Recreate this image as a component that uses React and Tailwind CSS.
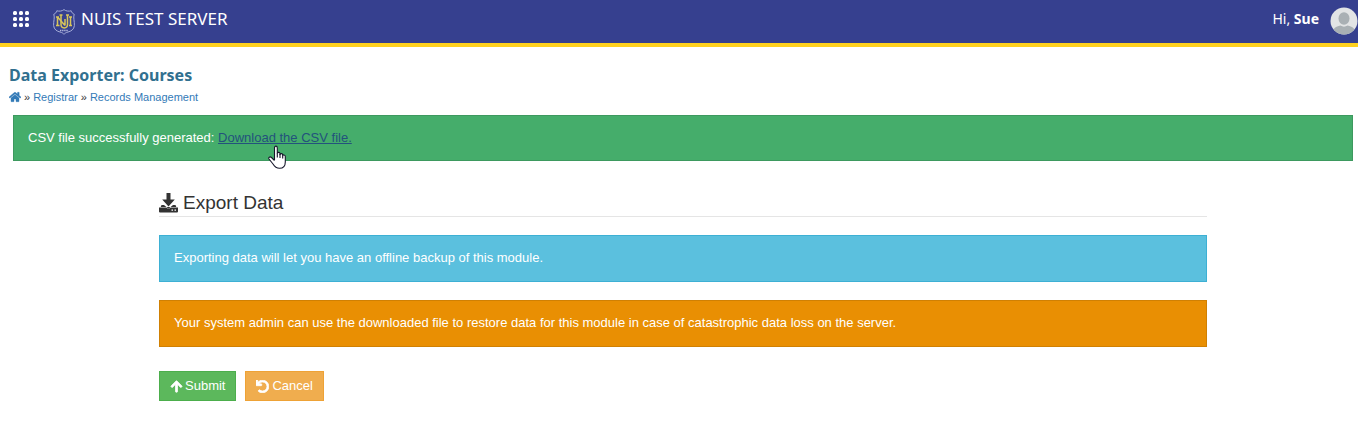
import React from 'react';
import { FaArrowUp, FaHome, FaUndo } from 'react-icons/fa';

function GridIcon() {
  return (
    <svg viewBox="0 0 16 16" className="w-4 h-4" fill="white" aria-hidden="true">
      {[0, 6, 12].map((y) =>
        [0, 6, 12].map((x) => <rect key={`${x}-${y}`} x={x} y={y} width="4" height="4" rx="1.6" />)
      )}
    </svg>
  );
}

function Crest() {
  return (
    <svg viewBox="0 0 22 26" className="w-[22px] h-[26px]" fill="none" aria-hidden="true">
      <path
        d="M11 .6C9 2.3 6 2.4 3.8 1.8C3.6 3.3 2.3 4.6.8 5.2C2 9 .4 12 .6 16.500C.9 20.500 4 22.300 7 23C9 23.500 10.300 24.300 11 25.300C11.700 24.300 13 23.500 15 23C18 22.300 21.100 20.500 21.400 16.500C21.600 12 20 9 21.200 5.200C19.700 4.600 18.400 3.300 18.200 1.800C16 2.400 13 2.300 11 .6Z"
        stroke="#a5acd8"
        strokeWidth="1"
      />
      <g stroke="#d9c65a" strokeWidth="1.500">
        <path d="M4.500 8V16.500M4.500 8L12 16.500M3 8H6M3 16.500H6.500M12 10V16.500" />
        <path d="M8 6V15.500C8 20 14.500 20 14.500 15.500V6M6.500 6H9.500M13 6H16" />
        <path d="M17.500 8V16.500M16 8H19M16 16.500H19" />
      </g>
      <path d="M7 21.500H15" stroke="#b4b9dd" strokeWidth="1.400" strokeDasharray="1.400 0.700" />
    </svg>
  );
}

function Avatar() {
  return (
    <svg viewBox="0 0 28 28" className="w-7 h-7" role="img" aria-label="User menu">
      <defs>
        <clipPath id="avatar-clip">
          <circle cx="14" cy="14" r="13.500" />
        </clipPath>
      </defs>
      <circle cx="14" cy="14" r="13.500" fill="#e2e4e5" />
      <g clipPath="url(#avatar-clip)" fill="#a9b0b4">
        <ellipse cx="14" cy="11.500" rx="5.500" ry="6.200" />
        <path d="M3.500 28V22.500C5 19.800 8 19.300 10.500 18.600C12.500 20 15.500 20 17.500 18.600C20 19.300 23 19.800 24.500 22.500V28Z" />
      </g>
    </svg>
  );
}

function SaveIcon() {
  return (
    <svg viewBox="0 0 19 20" className="w-[19px] h-5" fill="#333" aria-hidden="true">
      <path d="M7.500 0H11.500V6.500H15.800L9.500 13.500L3.200 6.500H7.500Z" />
      <path
        fillRule="evenodd"
        d="M2.500 12H5L9.500 15.700L14 12H16.500L17.300 14H1.700ZM0 14.500H7L9.500 16L12 14.500H19V18.500Q19 19.500 18 19.500H1Q0 19.500 0 18.500ZM12.500 16.500V17.800H14V16.500ZM15.500 16.500V17.800H17V16.500Z"
      />
    </svg>
  );
}

function HandCursor() {
  return (
    <svg viewBox="0 0 18 24" className="absolute left-[50px] top-[17px] w-[18px] h-6 pointer-events-none" aria-hidden="true">
      <path
        d="M6.500 15V3C6.500.5 9.300.5 9.300 3V8.500C9.500 6.900 12 7 12 8.800V9.600C12.200 8.200 14.700 8.300 14.700 10V10.700C15 9.500 17.300 9.700 17.300 11.500V17C17.300 21 15 23.300 11.500 23.300C8 23.300 6.500 21.500 5 19L1 14C0 12.500 2 11.200 3.500 12.500L6.500 15.500"
        fill="white"
        stroke="#16162a"
        strokeWidth="1.100"
        strokeLinejoin="round"
      />
      <path d="M9.300 8.500V12.500M12 9V13M14.700 10.500V13.500" stroke="#16162a" strokeWidth="1.100" />
    </svg>
  );
}

const alertColors = {
  success: 'py-3 bg-[#45ad6b] border-[#3d995f]',
  info: 'pt-3 pb-[13px] bg-[#5bc0de] border-[#3db0d4]',
  warning: 'pt-3 pb-[13px] bg-[#e98f03] border-[#d08003]',
};

function Alert({ type, children }) {
  return <div className={`border px-3.5 leading-5 text-white ${alertColors[type]}`}>{children}</div>;
}

export default function App() {
  return (
    <div className="bg-white text-[13px] text-[#333] font-['Liberation_Sans',Arial,sans-serif]">
      {/* Top bar */}
      <header className="flex items-center justify-between h-[47px] pl-[13px] border-b-4 border-[#ffd11f] bg-[#36408f] text-white font-['Noto_Sans',sans-serif]">
        <div className="flex items-center">
          <button type="button" aria-label="Open menu" className="mr-6 pb-1.5">
            <GridIcon />
          </button>
          <a href="#" className="flex items-center gap-1.5">
            <Crest />
            <span className="pb-1.5 text-[17px]">NUIS TEST SERVER</span>
          </a>
        </div>
        <button type="button" className="flex items-center gap-[11px] pb-0.5 text-sm">
          <span className="pb-1">
            Hi, <strong>Sue</strong>
          </span>
          <Avatar />
        </button>
      </header>

      {/* Page title */}
      <div className="px-[9px] pt-4">
        <h1 className="text-base leading-6 font-bold text-[#31708f] font-['Noto_Sans',sans-serif]">
          Data Exporter: Courses
        </h1>
        <nav aria-label="Breadcrumb" className="flex items-center gap-[3px] pt-0.5 text-[11px] leading-4 text-[#337ab7]">
          <a href="#" aria-label="Home">
            <FaHome className="w-3 h-3" stroke="currentColor" strokeWidth="20" />
          </a>
          <span className="text-[#333]">»</span>
          <a href="#">Registrar</a>
          <span className="text-[#333]">»</span>
          <a href="#">Records Management</a>
        </nav>
      </div>

      <main className="pl-[13px] pr-[5px] pt-2.5">
        <Alert type="success">
          CSV file successfully generated:{' '}
          <span className="relative inline-block">
            <a href="#" className="underline text-[#23527c]">
              Download the CSV file.
            </a>
            <HandCursor />
          </span>
        </Alert>

        <div className="mx-auto mt-7 max-w-[1048px]">
          <h2 className="flex items-center gap-[5px] pt-px border-b border-[#e5e5e5] text-[19px] leading-[26px]">
            <SaveIcon />
            Export Data
          </h2>
          <div className="flex flex-col gap-[18px] pt-[18px]">
            <Alert type="info">Exporting data will let you have an offline backup of this module.</Alert>
            <Alert type="warning">
              Your system admin can use the downloaded file to restore data for this module in case of catastrophic data
              loss on the server.
            </Alert>
          </div>

          {/* Actions */}
          <div className="flex gap-[9px] pt-6">
            <button
              type="button"
              className="flex items-center gap-0.5 h-[30px] px-2.5 border border-[#4cae4c] bg-[#5cb85c] text-white"
            >
              <FaArrowUp className="w-[13px] h-[13px]" stroke="currentColor" strokeWidth="30" />
              Submit
            </button>
            <button
              type="button"
              className="flex items-center gap-[3px] h-[30px] px-2.5 border border-[#eea236] bg-[#f0ad4e] text-white"
            >
              <FaUndo className="w-[13px] h-[13px]" stroke="currentColor" strokeWidth="30" />
              Cancel
            </button>
          </div>
        </div>
      </main>
    </div>
  );
}
